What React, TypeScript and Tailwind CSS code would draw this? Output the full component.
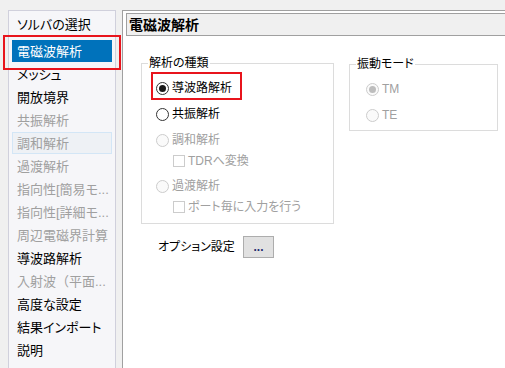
import React from 'react';

type ItemState = 'normal' | 'disabled' | 'selected' | 'hover';

const navItems: { label: string; state: ItemState }[] = [
  { label: 'ソルバの選択', state: 'normal' },
  { label: '電磁波解析', state: 'selected' },
  { label: 'メッシュ', state: 'normal' },
  { label: '開放境界', state: 'normal' },
  { label: '共振解析', state: 'disabled' },
  { label: '調和解析', state: 'hover' },
  { label: '過渡解析', state: 'disabled' },
  { label: '指向性[簡易モ...', state: 'disabled' },
  { label: '指向性[詳細モ...', state: 'disabled' },
  { label: '周辺電磁界計算', state: 'disabled' },
  { label: '導波路解析', state: 'normal' },
  { label: '入射波（平面...', state: 'disabled' },
  { label: '高度な設定', state: 'normal' },
  { label: '結果インポート', state: 'normal' },
  { label: '説明', state: 'normal' },
];

const NavItem: React.FC<{ label: string; state: ItemState; first?: boolean }> = ({ label, state, first }) => {
  const box =
    state === 'selected'
      ? 'border-[#0072bb] bg-[#0072bb] text-white'
      : state === 'hover'
        ? 'border-[#d3e6f6] bg-[#eef1f5] text-[#a0a0a0]'
        : state === 'disabled'
          ? 'border-transparent text-[#a0a0a0]'
          : 'border-transparent text-black';
  // full-width brackets keep their width, like the original list
  const wide = label.includes('（') ? '[font-feature-settings:normal]' : '';
  return (
    <div className={`h-[23px] px-[3px] ${first ? 'mb-[4px]' : ''}`}>
      <div className={`flex h-[22px] items-center overflow-hidden whitespace-nowrap border pl-[4px] text-[13px] leading-none ${box} ${wide}`}>
        {label}
      </div>
    </div>
  );
};

const Radio: React.FC<{ checked?: boolean; disabled?: boolean }> = ({ checked, disabled }) => (
  <span
    className={`flex h-[13px] w-[13px] shrink-0 items-center justify-center rounded-full border ${
      disabled ? 'border-[#cccccc] bg-[#fafafa]' : 'border-[#333333] bg-white'
    }`}
  >
    {checked && <span className={`h-[7px] w-[7px] rounded-full ${disabled ? 'bg-[#bdbdbd]' : 'bg-[#1a1a1a]'}`} />}
  </span>
);

const Checkbox: React.FC = () => <span className="h-[12px] w-[12px] shrink-0 border border-[#cccccc] bg-white" />;

const App: React.FC = () => {
  return (
    <div className="relative flex h-[368px] w-[505px] overflow-hidden bg-[#f0f0f0] pt-[10px] font-['Liberation_Sans','Noto_Sans_CJK_JP',sans-serif] [font-feature-settings:'palt']">
      {/* tree list */}
      <div className="ml-[8px] h-[400px] w-[108px] shrink-0 border border-[#d0d0dc] bg-[#f6f6f9] pt-[2px]">
        {navItems.map((item, i) => (
          <NavItem key={item.label} label={item.label} state={item.state} first={i === 0} />
        ))}
      </div>

      {/* settings page */}
      <div className="ml-[6px] h-[400px] flex-1 border-l border-t border-[#a0a0a0] bg-white">
        <div className="ml-[3px] mr-[-10px] mt-[2px] flex h-[23px] items-center border border-[#a0a0a0] bg-[#f0f0f0] pl-[2px] text-[14px] font-bold leading-none text-black">
          電磁波解析
        </div>

        <div className="flex items-start pl-[18px] pt-[20px] text-[12px] leading-none">
          <fieldset className="h-[168px] w-[193px] border border-[#dcdcdc]">
            <legend className="ml-[6px] px-[1px] text-[12px] leading-[14px] text-black">解析の種類</legend>
            <div className="relative mt-[5px] flex h-[26px] items-center pl-[14px] text-black">
              <Radio checked />
              <span className="ml-[3px]">導波路解析</span>
              <div className="absolute left-[9px] top-[-3px] h-[28px] w-[91px] border-2 border-[#e8141c]" />
            </div>
            <div className="flex h-[26px] items-center pl-[14px] text-black">
              <Radio />
              <span className="ml-[3px]">共振解析</span>
            </div>
            <div className="flex h-[26px] items-center pl-[14px] text-[#a0a0a0]">
              <Radio disabled />
              <span className="ml-[3px]">調和解析</span>
            </div>
            <div className="flex h-[16px] items-center pl-[31px] text-[#a0a0a0]">
              <Checkbox />
              <span className="ml-[3px]">TDRへ変換</span>
            </div>
            <div className="mt-[5px] flex h-[24px] items-center pl-[14px] text-[#a0a0a0]">
              <Radio disabled />
              <span className="ml-[3px]">過渡解析</span>
            </div>
            <div className="flex h-[18px] items-center pl-[31px] text-[#a0a0a0]">
              <Checkbox />
              <span className="ml-[3px]">ポート毎に入力を行う</span>
            </div>
          </fieldset>

          <fieldset className="ml-[15px] mt-[1px] h-[74px] w-[149px] border border-[#dcdcdc]">
            <legend className="ml-[6px] px-[1px] text-[12px] leading-[14px] text-black">振動モード</legend>
            <div className="mt-[5px] flex h-[26px] items-center pl-[16px] text-[#a0a0a0]">
              <Radio checked disabled />
              <span className="ml-[3px]">TM</span>
            </div>
            <div className="flex h-[26px] items-center pl-[16px] text-[#a0a0a0]">
              <Radio disabled />
              <span className="ml-[3px]">TE</span>
            </div>
          </fieldset>
        </div>

        <div className="mt-[12px] flex h-[22px] items-center pl-[35px] text-[12px] leading-none text-black">
          <span className="w-[85px] whitespace-nowrap">オプション設定</span>
          <button className="flex h-[22px] w-[31px] items-end justify-center border border-[#adadad] bg-[#e1e1e1] pb-[4px] text-[12px] font-bold leading-none text-[#1e2a6e]">
            ...
          </button>
        </div>
      </div>

      {/* highlight around the selected tree item */}
      <div className="absolute left-[3px] top-[35px] h-[35px] w-[118px] border-2 border-[#e8141c]" />
    </div>
  );
};

export default App;
